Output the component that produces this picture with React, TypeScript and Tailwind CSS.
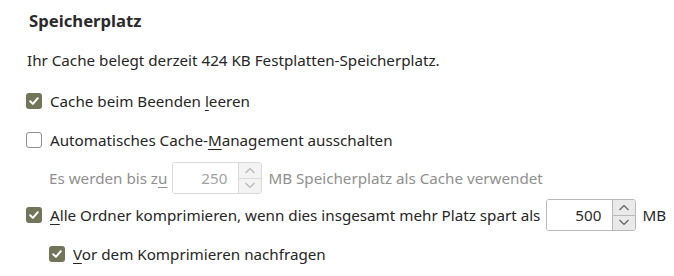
import React from "react";

const font = { fontFamily: '"Noto Sans", "Open Sans", sans-serif' };

function CheckBox({ checked }: { checked: boolean }) {
  if (checked) {
    return (
      <span className="flex h-[16px] w-[16px] shrink-0 items-center justify-center rounded-[3px] bg-[#73755a]">
        <svg width="12" height="12" viewBox="0 0 12 12">
          <polyline points="2.2,6.3 4.9,8.9 9.8,3.2" fill="none" stroke="#ffffff" strokeWidth="2" strokeLinecap="round" strokeLinejoin="round" />
        </svg>
      </span>
    );
  }
  return <span className="h-[16px] w-[16px] shrink-0 rounded-[3px] border-[1.5px] border-[#8e8e8e] bg-white" />;
}

function Spin({ value, disabled }: { value: string; disabled?: boolean }) {
  const stroke = disabled ? "#b4b4b4" : "#5a5a5a";
  return (
    <div
      className={
        "flex h-[32px] w-[90px] shrink-0 overflow-hidden rounded-[3px] border " +
        (disabled ? "border-[#dadada]" : "border-[#b9b9b9]")
      }
    >
      <div
        className={
          "flex flex-1 items-center justify-end bg-white pr-[11px] " +
          (disabled ? "text-[#a3a3a3]" : "text-[#2a2a2a]")
        }
      >
        {value}
      </div>
      <div
        className={
          "flex w-[23px] flex-col border-l " +
          (disabled ? "border-[#dadada] bg-[#f3f3f3]" : "border-[#b9b9b9] bg-[#e9e9e9]")
        }
      >
        <div className={"flex flex-1 items-center justify-center border-b " + (disabled ? "border-[#dadada]" : "border-[#b9b9b9]")}>
          <svg width="12" height="7" viewBox="0 0 12 7">
            <polyline points="1.5,6 6,1.5 10.5,6" fill="none" stroke={stroke} strokeWidth="1.1" />
          </svg>
        </div>
        <div className="flex flex-1 items-center justify-center">
          <svg width="12" height="7" viewBox="0 0 12 7">
            <polyline points="1.5,1 6,5.5 10.5,1" fill="none" stroke={stroke} strokeWidth="1.1" />
          </svg>
        </div>
      </div>
    </div>
  );
}

export default function App() {
  return (
    <div className="h-[276px] w-[674px] bg-white text-[15.2px] text-[#262626]" style={font}>
      <div className="flex flex-col pl-[26px]">
        <div className="flex h-[42px] items-center pl-[3px] text-[16.7px] font-bold text-[#2b2b2b]">Speicherplatz</div>
        <div className="flex h-[36px] items-center pl-[1px]">
          Ihr Cache belegt derzeit 424 KB Festplatten-Speicherplatz.
        </div>
        <div className="mt-[4px] flex h-[38px] items-center gap-[8px]">
          <CheckBox checked />
          <span>
            Cache beim Beenden <u className="underline-offset-[3px]">l</u>eeren
          </span>
        </div>
        <div className="mt-[1px] flex h-[38px] items-center gap-[8px]">
          <CheckBox checked={false} />
          <span>
            Automatisches Cache-<u className="underline-offset-[3px]">M</u>anagement ausschalten
          </span>
        </div>
        <div className="flex h-[38px] items-center pl-[23px] text-[#8f8f8f]">
          <span className="mr-[5px]">
            Es werden bis z<u className="underline-offset-[3px]">u</u>
          </span>
          <Spin value="250" disabled />
          <span className="ml-[6px]">MB Speicherplatz als Cache verwendet</span>
        </div>
        <div className="flex h-[36px] items-center gap-[8px]">
          <CheckBox checked />
          <span className="mr-[-2px] whitespace-nowrap">
            <u className="underline-offset-[3px]">A</u>lle Ordner komprimieren, wenn dies insgesamt mehr Platz spart als
          </span>
          <Spin value="500" />
          <span className="ml-[-2px]">MB</span>
        </div>
        <div className="mt-[2px] flex h-[38px] items-center gap-[8px] pl-[23px]">
          <CheckBox checked />
          <span>
            <u className="underline-offset-[3px]">V</u>or dem Komprimieren nachfragen
          </span>
        </div>
      </div>
    </div>
  );
}
